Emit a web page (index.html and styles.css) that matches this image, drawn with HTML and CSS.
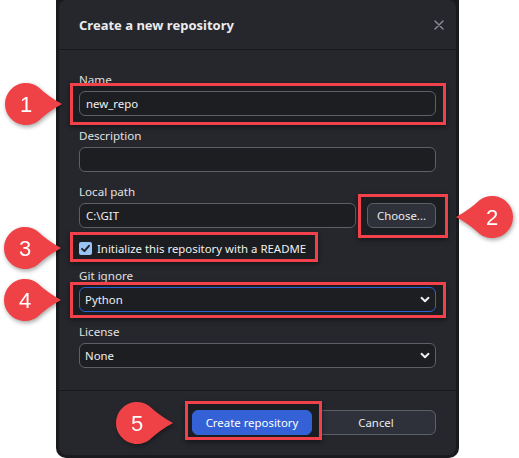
FILE: index.html
```html
<!DOCTYPE html>
<html lang="en">
<head>
<meta charset="utf-8">
<title>Create a new repository</title>
<link rel="stylesheet" href="styles.css">
</head>
<body>
<div class="stage">
  <div class="frame">
    <div class="dialog">
      <header class="dlg-head">
        <h1 class="dlg-title">Create a new repository</h1>
        <span class="close" aria-label="Close">
          <svg width="10" height="10" viewBox="0 0 10 10"><path d="M1 1 L9 9 M9 1 L1 9" stroke="#8d9096" stroke-width="1.4" stroke-linecap="round"/></svg>
        </span>
      </header>
      <div class="dlg-body">
        <div class="field">
          <div class="label">Name</div>
          <span class="hl hl-name"><span class="input">new_repo</span></span>
        </div>
        <div class="field">
          <div class="label">Description</div>
          <span class="input"></span>
        </div>
        <div class="field">
          <div class="label">Local path</div>
          <div class="path-row">
            <span class="input grow">C:\GIT</span>
            <span class="hl hl-choose"><span class="btn choose">Choose...</span></span>
          </div>
        </div>
        <div class="field">
          <span class="hl hl-check">
            <span class="check-row">
              <span class="checkbox"><svg width="13" height="13" viewBox="0 0 13 13"><path d="M3 6.8 L5.4 9.2 L10 3.8" fill="none" stroke="#1f2024" stroke-width="1.9" stroke-linecap="round" stroke-linejoin="round"/></svg></span>
              <span class="check-text">Initialize this repository with a README</span>
            </span>
          </span>
        </div>
        <div class="field">
          <div class="label">Git ignore</div>
          <span class="hl hl-git"><span class="select focus"><span>Python</span><svg class="chev" width="10" height="7" viewBox="0 0 10 7"><path d="M1.5 1.8 L5 5.2 L8.5 1.8" fill="none" stroke="#f2f2f2" stroke-width="1.9" stroke-linecap="round" stroke-linejoin="round"/></svg></span></span>
        </div>
        <div class="field last">
          <div class="label">License</div>
          <span class="select"><span>None</span><svg class="chev" width="10" height="7" viewBox="0 0 10 7"><path d="M1.5 1.8 L5 5.2 L8.5 1.8" fill="none" stroke="#f2f2f2" stroke-width="1.9" stroke-linecap="round" stroke-linejoin="round"/></svg></span>
        </div>
      </div>
      <footer class="dlg-foot">
        <span class="hl hl-create"><span class="btn primary">Create repository</span></span>
        <span class="btn cancel">Cancel</span>
      </footer>
    </div>
  </div>

  <svg class="badge b1" width="70" height="56" viewBox="0 0 70 56"><path d="M60 26 Q47 19 36.25 8.95 A21 21 0 1 0 36.25 43.05 Q47 33 60 26 Z" fill="#ef4247"/><text x="24" y="33.5" text-anchor="middle">1</text></svg>
  <svg class="badge b2" width="70" height="56" viewBox="0 0 70 56"><path d="M10 26 Q23 19 33.75 8.95 A21 21 0 1 1 33.75 43.05 Q23 33 10 26 Z" fill="#ef4247"/><text x="46" y="33.5" text-anchor="middle">2</text></svg>
  <svg class="badge b3" width="70" height="56" viewBox="0 0 70 56"><path d="M60 26 Q47 19 36.25 8.95 A21 21 0 1 0 36.25 43.05 Q47 33 60 26 Z" fill="#ef4247"/><text x="24" y="33.5" text-anchor="middle">3</text></svg>
  <svg class="badge b4" width="70" height="56" viewBox="0 0 70 56"><path d="M60 26 Q47 19 36.25 8.95 A21 21 0 1 0 36.25 43.05 Q47 33 60 26 Z" fill="#ef4247"/><text x="24" y="33.5" text-anchor="middle">4</text></svg>
  <svg class="badge b5" width="70" height="56" viewBox="0 0 70 56"><path d="M60 26 Q47 19 36.25 8.95 A21 21 0 1 0 36.25 43.05 Q47 33 60 26 Z" fill="#ef4247"/><text x="24" y="33.5" text-anchor="middle">5</text></svg>
</div>
</body>
</html>
```
FILE: styles.css
```css
* { box-sizing: border-box; }
html, body { margin: 0; padding: 0; background: #ffffff; }
body { font-family: "Noto Sans", "Open Sans", sans-serif; font-size: 11.4px; color: #e6e6e6; }

.stage { position: relative; width: 519px; height: 458px; overflow: hidden; }

.frame {
  margin-left: 56px;
  width: 403px;
  background: #1a1b1e;
  padding: 0 3px 3px;
  border-radius: 0 0 10px 10px;
}
.dialog {
  background: #25272c;
  border-radius: 8px;
  display: flex;
  flex-direction: column;
}

.dlg-head {
  height: 50px;
  border-bottom: 1px solid #18191c;
  display: flex;
  align-items: center;
  justify-content: space-between;
  padding: 1px 12px 0 20px;
}
.dlg-title { margin: 0; font-size: 13px; font-weight: 700; color: #ececec; }
.close { display: flex; width: 10px; height: 10px; }

.dlg-body { padding: 22px 20px 22px; display: flex; flex-direction: column; }
.field { display: flex; flex-direction: column; margin-bottom: 12px; }
.field.last { margin-bottom: 0; }
.label { line-height: 16px; height: 16px; margin-bottom: 3px; color: #e2e2e2; font-size: 11.6px; }

.input {
  display: flex; align-items: center;
  height: 25px;
  width: 357px;
  background: #1d1e22;
  border: 1px solid #5c6067;
  border-radius: 6px;
  padding: 0 6px;
  color: #f0f0f0;
  font-size: 11.4px;
}
.path-row { display: flex; gap: 11px; }
.input.grow { width: auto; flex: 1; }

.btn {
  display: flex; align-items: center; justify-content: center;
  height: 25px;
  border-radius: 6px;
  background: #2e3139;
  border: 1px solid #5c6067;
  color: #ececec;
  font-size: 11.4px;
}
.choose { width: 69px; }

.check-row { display: flex; align-items: center; height: 16px; gap: 5px; }
.checkbox {
  width: 13px; height: 13px; border-radius: 2px;
  background: #99c3f5; display: flex;
}
.check-text { color: #f0f0f0; font-size: 11.4px; }

.select {
  display: flex; align-items: center; justify-content: space-between;
  height: 25px; width: 357px;
  background: #1d1e22;
  border: 1px solid #5c6067;
  border-radius: 6px;
  padding: 0 5px 0 5px;
  color: #f0f0f0;
  font-size: 11.4px;
}
.select.focus { border: 1.5px solid #2c62d6; }

.dlg-foot {
  border-top: 1px solid #18191c;
  padding: 19px 20px 20px;
  display: flex; justify-content: flex-end; gap: 4px;
}
.primary { width: 120px; background: #3462d6; border-color: #3462d6; color: #ffffff; }
.cancel { width: 120px; }

/* annotation highlight boxes */
.hl { position: relative; display: flex; align-self: flex-start; }
.hl > * { position: relative; z-index: 1; }
.hl::before {
  content: "";
  position: absolute;
  z-index: 0;
  border: 3px solid #f1414a;
  background: #1c1d21;
  box-shadow: 0 2px 5px rgba(0,0,0,0.45);
}
.hl-name::before { left: -9px; right: -10px; top: -8px; bottom: -9px; }
.hl-choose::before { left: -9px; right: -12px; top: -9px; bottom: -10px; }
.hl-check::before { left: -9px; right: -12px; top: -8px; bottom: -6px; }
.hl-git::before { left: -9px; right: -10px; top: -5px; bottom: -6px; }
.hl-create::before { left: -7px; right: -10px; top: -9px; bottom: -5px; }

/* numbered callouts */
.badge { position: absolute; filter: drop-shadow(1px 2px 2px rgba(0,0,0,0.35)); }
.badge text { font-family: "Liberation Sans", Arial, sans-serif; font-size: 22px; fill: #ffffff; }
.b1 { left: 2px; top: 78px; }
.b2 { left: 446px; top: 191px; }
.b3 { left: 1px; top: 222px; }
.b4 { left: 1px; top: 274px; }
.b5 { left: 113px; top: 397px; }
```
